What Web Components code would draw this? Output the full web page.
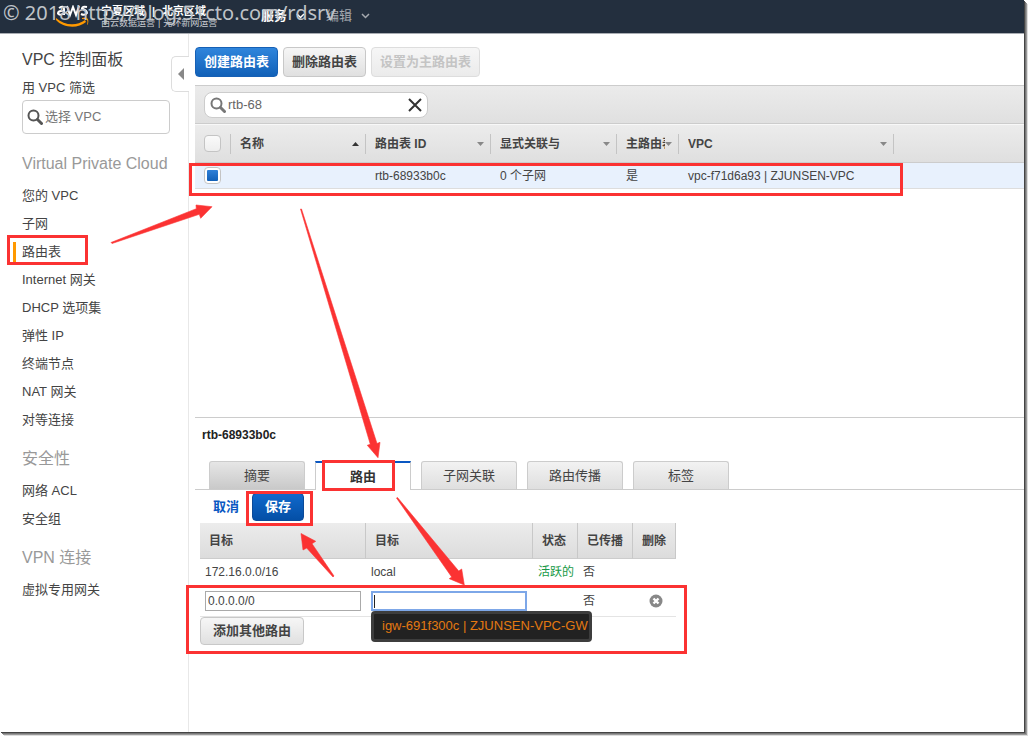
<!DOCTYPE html>
<html lang="zh-CN">
<head>
<meta charset="utf-8">
<title>VPC 控制面板</title>
<style>
html { background: #fff; }
body { margin: 0; padding: 0 4px 4px 0; font: 13px/20px "Liberation Sans", "Noto Sans CJK SC", sans-serif; color: #444; }
</style>
</head>
<body>
<vpc-console>
  <console-header slot="header"></console-header>
  <side-nav slot="nav">
    <nav-section heading="Virtual Private Cloud">
      <nav-item>您的 VPC</nav-item>
      <nav-item>子网</nav-item>
      <nav-item current>路由表</nav-item>
      <nav-item>Internet 网关</nav-item>
      <nav-item>DHCP 选项集</nav-item>
      <nav-item>弹性 IP</nav-item>
      <nav-item>终端节点</nav-item>
      <nav-item>NAT 网关</nav-item>
      <nav-item>对等连接</nav-item>
    </nav-section>
    <nav-section heading="安全性">
      <nav-item>网络 ACL</nav-item>
      <nav-item>安全组</nav-item>
    </nav-section>
    <nav-section heading="VPN 连接">
      <nav-item>虚拟专用网关</nav-item>
    </nav-section>
  </side-nav>
  <action-bar>
    <push-button kind="primary">创建路由表</push-button>
    <push-button>删除路由表</push-button>
    <push-button disabled>设置为主路由表</push-button>
  </action-bar>
  <filter-bar></filter-bar>
  <route-table-list></route-table-list>
  <detail-pane heading="rtb-68933b0c">
    <tab-strip slot="tabs">
      <tab-item pressed>摘要</tab-item>
      <tab-item current>路由</tab-item>
      <tab-item>子网关联</tab-item>
      <tab-item>路由传播</tab-item>
      <tab-item>标签</tab-item>
    </tab-strip>
    <route-editor></route-editor>
  </detail-pane>
  <markup-layer slot="overlay"></markup-layer>
</vpc-console>

<script>
function define(name, html, setup) {
  const template = document.createElement('template');
  template.innerHTML = '<style>*{box-sizing:border-box}button,input{font:inherit;color:inherit;margin:0}</style>' + html;
  customElements.define(name, class extends HTMLElement {
    constructor() {
      super();
      this.attachShadow({ mode: 'open' }).appendChild(template.content.cloneNode(true));
    }
    connectedCallback() { if (setup) setup(this, this.shadowRoot); }
  });
}

define('vpc-console', `
<style>
:host { display: flex; flex-direction: column; position: relative; min-height: calc(100vh - 4px); background: #fff;
  box-shadow: 1px 1px 0 #444, 2px 2px 0 #777, 3px 3px 0 #999, 4px 4px 0 #ddd; }
.body { flex: 1; display: grid; grid-template-columns: 189px minmax(0, 1fr); }
main { padding: 13px 0 0 6px; }
</style>
<slot name="header"></slot>
<div class="body">
  <slot name="nav"></slot>
  <main><slot></slot></main>
</div>
<slot name="overlay"></slot>`);

define('console-header', `
<style>
:host { display: flex; position: relative; height: 34px; box-sizing: border-box; background: #232f3e; border-bottom: 1px solid #a9adb3; overflow: hidden; color: #fff; padding-left: 56px; }
.logo { width: 34px; height: 22px; margin-top: 5px; display: block; }
.regions { margin: 5px 0 0 11px; width: 160px; }
.names { display: flex; font-size: 11px; line-height: 12px; font-weight: bold; gap: 7px; white-space: nowrap; }
.ops { display: flex; font-size: 9px; line-height: 12px; gap: 3px; color: #c9ccd1; white-space: nowrap; }
button { display: flex; align-items: center; background: none; border: 0; padding: 0; gap: 9px; height: 32px; white-space: nowrap; }
button svg { width: 9px; height: 6px; }
.services { font-weight: bold; }
.edit { color: #a5a9af; margin-left: 21px; }
.mark { position: absolute; left: 3px; top: 0; font: 20px/25px "Noto Sans", sans-serif; color: #bfc3c8; white-space: nowrap; }
</style>
<svg class="logo" viewBox="0 0 34 22">
  <g fill="none" stroke="#fff" stroke-width="2"><path d="M3 3q5-3 5 1v6M8 6H5q-3 0-3 2.500q3 3 6-1"/><path d="M11 1l3 9 3-8 3 8 3-9"/><path d="M31 2q-5-1-5 1.500 5 2 5 4.500-2 3-6 1"/></g>
  <path d="M0 13c9 8 21 8 29 2l1 2C22 24 7 23 0 15z" fill="#f90"/><path d="M26 13q8-2 6 6l-1 1q1-4 0-5-2-1-5-1z" fill="#f90"/>
</svg>
<div class="regions">
  <div class="names"><span>宁夏区域</span><span>|</span><span>北京区域</span></div>
  <div class="ops"><span>西云数据运营</span><span>|</span><span>光环新网运营</span></div>
</div>
<button class="services" type="button">服务<svg viewBox="0 0 9 6"><path d="M1 1l3.500 3.500L8 1" fill="none" stroke="#fff" stroke-width="1.500"/></svg></button>
<button class="edit" type="button">编辑<svg viewBox="0 0 9 6"><path d="M1 1l3.500 3.500L8 1" fill="none" stroke="#a5a9af" stroke-width="1.500"/></svg></button>
<span class="mark">© 2018 http://blog.51cto.com/rdsrv</span>`);

define('side-nav', `
<style>
:host { display: block; position: relative; border-right: 1px solid #e8e8e8; padding: 12px 18px 20px 0; }
h1 { margin: 0 0 2px 22px; font-size: 16px; line-height: 28px; font-weight: normal; }
label { display: block; margin-left: 22px; line-height: 24px; }
.box { display: flex; align-items: center; gap: 2px; height: 34px; margin: 0 0 12px 22px; padding: 0 4px; border: 1px solid #ccc; border-radius: 4px; }
.box svg { flex: none; width: 16px; height: 16px; }
input { min-width: 0; flex: 1; border: 0; padding: 0; background: none; outline: 0; }
input::placeholder { color: #777; }
.fold { position: absolute; right: -1px; top: 22px; width: 18px; height: 36px; padding: 0 4px 0 6px; display: flex; align-items: center; background: #fff; border: 1px solid #ddd; border-right: 0; border-radius: 5px 0 0 5px; }
.fold svg { width: 6px; height: 12px; }
</style>
<h1>VPC 控制面板</h1>
<label for="vpc">用 VPC 筛选</label>
<div class="box">
  <svg viewBox="0 0 16 16" fill="none" stroke="#555"><circle cx="6.500" cy="6.500" r="5" stroke-width="2"/><path d="M10.500 10.500l4 4" stroke-width="3" stroke-linecap="round"/></svg>
  <input id="vpc" type="text" placeholder="选择 VPC">
</div>
<nav><slot></slot></nav>
<button class="fold" type="button" aria-label="收起"><svg viewBox="0 0 6 12"><path d="M6 0v12L0 6z" fill="#888"/></svg></button>`);

define('nav-section', `
<style>
:host { display: block; margin-bottom: 7px; }
h2 { margin: 0 0 0 22px; font-size: 16px; line-height: 36px; font-weight: normal; color: #999; white-space: nowrap; }
</style>
<h2></h2><slot></slot>`, (host, root) => { root.querySelector('h2').textContent = host.getAttribute('heading'); });

define('nav-item', `
<style>
:host { display: flex; align-items: center; height: 28px; padding-left: 13px; }
a { color: #444; text-decoration: none; line-height: 20px; padding-left: 6px; border-left: 3px solid transparent; }
:host([current]) a { border-color: #f90; }
</style>
<a href="#"><slot></slot></a>`);

define('action-bar', `
<style>:host { display: flex; gap: 5px; margin-bottom: 8px; }</style><slot></slot>`);

define('push-button', `
<style>
:host { display: block; }
button { display: block; height: 30px; padding: 0 8px; font-weight: bold; line-height: 20px; white-space: nowrap; border: 1px solid #c8c8c8; border-radius: 4px; background: linear-gradient(#f6f6f6, #e0e0e0); color: #444; }
:host([kind]) button { color: #fff; border-color: #1660b5; background: linear-gradient(#2f85dc, #1161b8); }
:host([kind=save]) button { height: 28px; padding: 0 12px; border-color: #0b4a98; background: linear-gradient(#1069cc, #044fa6); }
:host([compact]) button { height: 28px; padding: 0 12px; }
:host([disabled]) button { color: #c4c4c4; border-color: #ddd; background: linear-gradient(#f6f6f6, #ebebeb); }
</style>
<button type="button"><slot></slot></button>`, (host, root) => { root.querySelector('button').disabled = host.hasAttribute('disabled'); });

define('filter-bar', `
<style>
:host { display: flex; height: 39px; box-sizing: border-box; padding: 6px 9px; background: linear-gradient(#ebebeb, #e0e0e0); border-top: 1px solid #ccc; border-bottom: 1px solid #ccc; }
.box { display: flex; align-items: center; gap: 2px; width: 224px; height: 26px; padding: 0 5px; background: #fff; border: 1px solid #ccc; border-radius: 8px; }
svg { display: block; width: 16px; height: 16px; flex: none; }
input { min-width: 0; flex: 1; border: 0; padding: 0; background: none; outline: 0; color: #666; }
button { border: 0; background: none; padding: 0; width: 14px; }
button svg { width: 14px; height: 14px; }
</style>
<div class="box">
  <svg viewBox="0 0 16 16" fill="none" stroke="#777"><circle cx="6.500" cy="6.500" r="5" stroke-width="2"/><path d="M10.500 10.500l4 4" stroke-width="3" stroke-linecap="round"/></svg>
  <input type="text" value="rtb-68" aria-label="搜索">
  <button type="button" aria-label="清除"><svg viewBox="0 0 14 14"><path d="M1 1l12 12M13 1L1 13" stroke="#333" stroke-width="2"/></svg></button>
</div>`);

define('route-table-list', `
<style>
:host { display: block; min-height: 293px; }
table { width: 100%; border-collapse: separate; border-spacing: 0; table-layout: fixed; font-size: 12px; }
th, td { padding: 0 0 0 9px; text-align: left; overflow: hidden; white-space: nowrap; }
th { height: 39px; background: linear-gradient(#ececec, #dfdfdf); border-bottom: 1px solid #ccc; border-top: 1px solid #f8f8f8; }
th > div { display: flex; align-items: center; justify-content: space-between; height: 20px; padding-right: 6px; border-right: 1px solid #c4c4c4; }
th span { flex: 1; min-width: 0; overflow: hidden; }
th:last-child > div { border: 0; }
th svg { flex: none; width: 7px; height: 4px; }
td { height: 26px; background: #e8f1fd; border-bottom: 1px solid #ddd; line-height: 20px; }
input { appearance: none; display: block; width: 17px; height: 17px; border: 1px solid #c4c4c4; border-radius: 4px; background: linear-gradient(#fafafa, #eee); }
input:checked { padding: 2px; background: linear-gradient(#2f80d8, #1160b8) content-box, #fff; }
</style>
<table>
  <colgroup><col style="width:36px"><col style="width:135px"><col style="width:125px"><col style="width:126px"><col style="width:62px"><col style="width:215px"><col></colgroup>
  <thead><tr>
    <th><div><input type="checkbox" aria-label="全选"></div></th>
    <th><div><span>名称</span><svg viewBox="0 0 7 4"><path d="M0 4h7L3.500 0z" fill="#333"/></svg></div></th>
    <th><div><span>路由表 ID</span><svg viewBox="0 0 7 4"><path d="M0 0h7L3.500 4z" fill="#888"/></svg></div></th>
    <th><div><span>显式关联与</span><svg viewBox="0 0 7 4"><path d="M0 0h7L3.500 4z" fill="#888"/></svg></div></th>
    <th><div><span>主路由表</span><svg viewBox="0 0 7 4"><path d="M0 0h7L3.500 4z" fill="#888"/></svg></div></th>
    <th><div><span>VPC</span><svg viewBox="0 0 7 4"><path d="M0 0h7L3.500 4z" fill="#888"/></svg></div></th>
    <th></th>
  </tr></thead>
  <tbody><tr>
    <td><input type="checkbox" checked aria-label="rtb-68933b0c"></td><td></td><td>rtb-68933b0c</td><td>0 个子网</td><td>是</td><td>vpc-f71d6a93 | ZJUNSEN-VPC</td><td></td>
  </tr></tbody>
</table>`);

define('detail-pane', `
<style>
:host { display: block; border-top: 1px solid #ccc; padding-top: 7px; }
h3 { margin: 0 0 16px 7px; font-size: 12px; line-height: 20px; color: #222; }
</style>
<h3></h3><slot name="tabs"></slot><slot></slot>`, (host, root) => { root.querySelector('h3').textContent = host.getAttribute('heading'); });

define('tab-strip', `
<style>:host { display: flex; gap: 10px; padding-left: 14px; border-bottom: 1px solid #ccc; height: 28px; }</style><slot></slot>`);

define('tab-item', `
<style>
:host { display: block; width: 96px; height: 28px; }
button { width: 100%; height: 28px; padding: 0; border: 1px solid #ccc; border-bottom: 0; border-radius: 3px 3px 0 0; background: linear-gradient(#f2f2f2, #dfdfdf); }
:host([pressed]) button { background: linear-gradient(#e6e6e6, #c9c9c9); }
:host([current]) { height: 29px; }
:host([current]) button { height: 29px; background: #fff; border-top: 2px solid #0a57c2; border-radius: 0; font-weight: bold; color: #333; }
</style>
<button type="button"><slot></slot></button>`);

define('route-editor', `
<style>
:host { display: block; padding: 3px 0 0 5px; }
.acts { display: flex; align-items: center; gap: 13px; padding-left: 13px; height: 28px; margin-bottom: 2px; }
a { color: #0a57c2; font-weight: bold; text-decoration: none; }
table { width: 476px; table-layout: fixed; border-collapse: separate; border-spacing: 0; font-size: 12px; }
th { height: 36px; padding: 0 0 0 9px; text-align: left; background: linear-gradient(#ececec, #dcdcdc); border-right: 1px solid #c8c8c8; border-bottom: 1px solid #ccc; white-space: nowrap; }
td { height: 26px; padding: 0 0 0 5px; line-height: 20px; white-space: nowrap; }
tr.edit td { height: 32px; border-bottom: 1px solid #e4e4e4; }
.ok { color: #189a48; }
input { display: block; width: 156px; height: 20px; padding: 0 2px; border: 1px solid #aaa; background: #fff; }
.target { position: relative; }
.target input { border: 2px solid #7da7e8; outline: 0; }
.caret { position: absolute; left: 3px; top: 4px; width: 1px; height: 13px; background: #222; }
.menu { position: absolute; left: 0; top: 20px; width: 221px; height: 31px; margin: 0; padding: 2px 8px; list-style: none; background: #222; border: 3px solid #3d3d3d; border-radius: 4px; color: #e47911; font-size: 13px; }
td button { display: block; padding: 0; border: 0; background: none; margin-left: 11px; }
td svg { display: block; width: 14px; height: 14px; }
</style>
<div class="acts"><a href="#">取消</a><push-button kind="save">保存</push-button></div>
<table>
  <colgroup><col style="width:166px"><col style="width:167px"><col style="width:45px"><col style="width:55px"><col style="width:43px"></colgroup>
  <thead><tr><th>目标</th><th>目标</th><th>状态</th><th>已传播</th><th>删除</th></tr></thead>
  <tbody>
    <tr><td>172.16.0.0/16</td><td>local</td><td class="ok">活跃的</td><td>否</td><td></td></tr>
    <tr class="edit">
      <td><input type="text" value="0.0.0.0/0" aria-label="目标网段"></td>
      <td><div class="target"><input type="text" aria-label="目标"><span class="caret"></span><ul class="menu"><li>igw-691f300c | ZJUNSEN-VPC-GW</li></ul></div></td>
      <td></td><td>否</td>
      <td><button type="button" aria-label="删除"><svg viewBox="0 0 14 14"><circle cx="7" cy="7" r="6.500" fill="#888"/><path d="M4.500 4.500l5 5M9.500 4.500l-5 5" stroke="#fff" stroke-width="2.400"/></svg></button></td>
    </tr>
  </tbody>
</table>
<push-button compact>添加其他路由</push-button>`);

define('markup-layer', `
<style>
:host { position: absolute; left: 0; top: 0; pointer-events: none; }
svg { display: block; }
</style>
<svg width="720" height="680" viewBox="0 0 720 680" style="overflow:visible">
  <g fill="none" stroke="#fb3232" stroke-width="3">
    <path d="M8.500 236.500h78v27h-78z"/>
    <path d="M190.500 164.500h711v30h-711z"/>
    <path d="M323.500 461.500h70v28h-70z"/>
    <path d="M247.500 492.500h64v32h-64z"/>
    <path d="M187.500 586.500h498v66h-498z"/>
  </g>
  <g fill="#fb3232" stroke="#fb3232" stroke-width=".6">
    <path d="M111 242.500L196.300 208.700 196 205 212 206.700 200.700 218.300 199.300 214.300 112 243.500z"/>
    <path d="M300.500 209L301.500 209 377 443.500 380 442.300 378 457.700 367.300 445.300 370.300 444.300z"/>
    <path d="M396.500 498L397.500 497.500 458.700 571 461.700 569 464.300 585 449.300 578.700 451.700 577z"/>
    <path d="M334 576L333 577 306.700 548 303 550 301 533.500 315.700 541.300 312 543.700z"/>
  </g>
</svg>`);
</script>
</body>
</html>
